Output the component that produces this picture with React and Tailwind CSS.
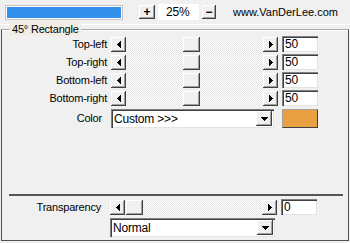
import React from "react";

const raised =
  "bg-[#f0f0f0] shadow-[inset_-1px_-1px_#404040,inset_1px_1px_#ffffff,inset_-2px_-2px_#a0a0a0]";
const sunken =
  "bg-white shadow-[inset_1px_1px_#808080,inset_2px_2px_#404040,inset_-1px_-1px_#e3e3e3]";
const track =
  "bg-[image:repeating-conic-gradient(#e4e4e4_0%_25%,#ffffff_0%_50%)] bg-[length:2px_2px]";

function ArrowLeft() {
  return (
    <svg width="4" height="7" shapeRendering="crispEdges">
      <polygon points="4,0 4,7 0,3.5" fill="#000" />
    </svg>
  );
}

function ArrowRight() {
  return (
    <svg width="4" height="7" shapeRendering="crispEdges">
      <polygon points="0,0 0,7 4,3.5" fill="#000" />
    </svg>
  );
}

function ArrowDown() {
  return (
    <svg width="7" height="4" shapeRendering="crispEdges">
      <polygon points="0,0 7,0 3.5,4" fill="#000" />
    </svg>
  );
}

function Slider({ offset }) {
  return (
    <div className="flex h-[15px] w-[167px]">
      <div className={`${raised} flex w-[15px] items-center justify-center`}>
        <ArrowLeft />
      </div>
      <div className={`${track} flex flex-1`}>
        <div className={`${raised} h-full w-[17px]`} style={{ marginLeft: offset }} />
      </div>
      <div className={`${raised} flex w-[15px] items-center justify-center`}>
        <ArrowRight />
      </div>
    </div>
  );
}

function Field({ value }) {
  return (
    <div className={`${sunken} ml-[4px] flex h-[16px] w-[36px] items-center pl-[3px] text-[12px]`}>
      {value}
    </div>
  );
}

function Select({ value, width }) {
  return (
    <div className={`${sunken} flex h-[19px] items-center justify-between pl-[3px] pr-[2px] text-[12px] ${width}`}>
      <span>{value}</span>
      <div className={`${raised} flex h-[15px] w-[16px] items-center justify-center`}>
        <ArrowDown />
      </div>
    </div>
  );
}

function SliderRow({ label, value, offset }) {
  return (
    <div className="flex h-[18px] items-center">
      <div className="w-[106px] pr-[1px] text-right">{label}</div>
      <div className="ml-[3px]">
        <Slider offset={offset} />
      </div>
      <Field value={value} />
    </div>
  );
}

export default function App() {
  return (
    <div
      className="h-[243px] w-[350px] overflow-hidden bg-[#f0f0f0] text-[11px] tracking-[-0.2px] text-black"
      style={{ fontFamily: '"Liberation Sans", Arial, sans-serif' }}
    >
      <div className="flex h-[25px] items-center border-b border-white pl-[5px]">
        <div className="h-[15px] w-[118px] border border-[#c4c4c4] bg-white p-[1px]">
          <div className="h-full w-full bg-[#3390ec]" />
        </div>
        <div className={`${raised} ml-[16px] flex h-[14px] w-[16px] items-center justify-center text-[12px] font-bold`}>
          +
        </div>
        <div className="ml-[3px] flex h-[16px] w-[41px] items-center bg-white pl-[8px] text-[12px]">25%</div>
        <div className={`${raised} ml-[3px] flex h-[14px] w-[14px] items-center justify-center text-[12px] font-bold`}>
          −
        </div>
        <div className="ml-[17px] tracking-normal">www.VanDerLee.com</div>
      </div>

      <div className="relative ml-[1px] mt-[4px] h-[212px] w-[348px] border border-[#505050] border-t-[#a8a8a8] shadow-[inset_0_1px_#ffffff]">
        <div className="absolute -top-[8px] left-[8px] bg-[#f1ede3] px-[2px] leading-[14px]">45° Rectangle</div>

        <div className="pt-[5px]">
          <SliderRow label="Top-left" value="50" offset={57} />
          <SliderRow label="Top-right" value="50" offset={57} />
          <SliderRow label="Bottom-left" value="50" offset={57} />
          <SliderRow label="Bottom-right" value="50" offset={57} />

          <div className="mt-[2px] flex h-[19px] items-center">
            <div className="w-[106px] pr-[6px] text-right">Color</div>
            <div className="ml-[3px]">
              <Select value="Custom >>>" width="w-[163px]" />
            </div>
            <div className="ml-[8px] h-[19px] w-[36px] border border-[#a0a0a0] border-b-[#404040] border-r-[#404040] bg-[#e8a040]" />
          </div>

          <div className="ml-[7px] mt-[66px] h-[2px] w-[334px] bg-[#555555]" />

          <div className="mt-[3px] flex h-[16px] items-center">
            <div className="w-[105px] pr-[6px] text-right">Transparency</div>
            <div className="ml-[3px]">
              <Slider offset={1} />
            </div>
            <Field value="0" />
          </div>

          <div className="ml-[108px] mt-[3px]">
            <Select value="Normal" width="w-[165px]" />
          </div>
        </div>
      </div>
    </div>
  );
}
